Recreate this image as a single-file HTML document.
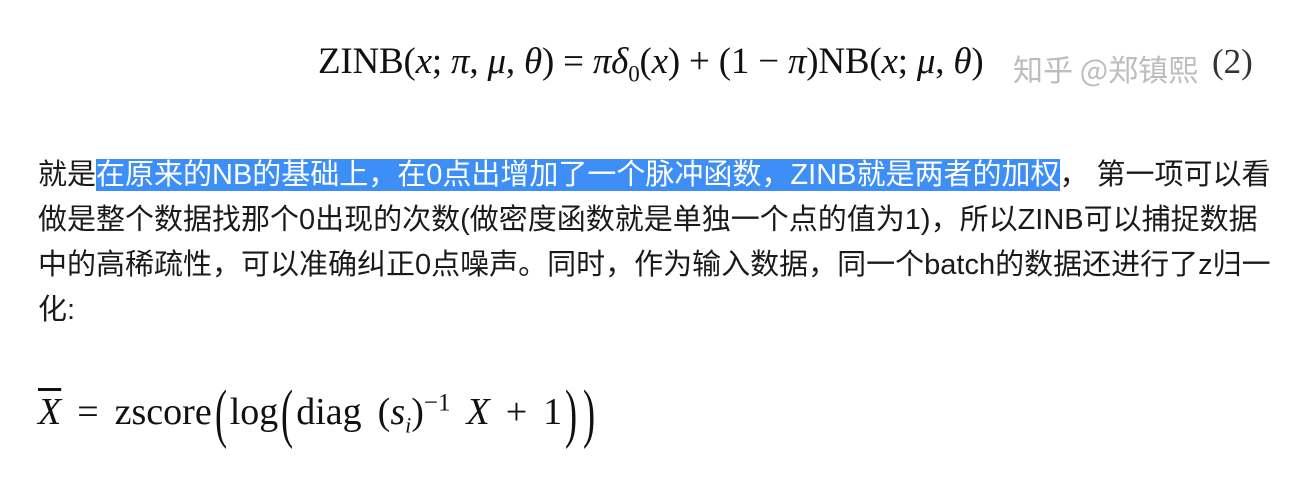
<!DOCTYPE html>
<html><head><meta charset="utf-8"><style>
body{margin:0;width:1289px;height:481px;background:#fff;position:relative;overflow:hidden;font-family:"Liberation Sans","Noto Sans CJK SC",sans-serif;color:#1a1a1a}
.f1{position:absolute;left:318px;top:40px;font-family:"Liberation Serif",serif;font-size:37px;letter-spacing:-0.2px;white-space:nowrap;color:#111}
.f1 i{font-style:italic}
.wm{position:absolute;left:1013px;top:46px;font-size:30px;color:#bdbdbd;font-family:"Noto Sans CJK SC",sans-serif;white-space:nowrap}
.n2{position:absolute;left:1212px;top:42px;font-family:"Liberation Serif",serif;font-size:35px;color:#333}
.p{position:absolute;left:38px;white-space:nowrap;font-size:29px;line-height:45px}
.hl{background:#3e8ef7;color:#fff}
.f2{position:absolute;left:38px;top:376px;font-family:"Liberation Serif",serif;font-size:38px;white-space:nowrap;color:#111}
.big{font-size:66px;display:inline-block;transform:scaleX(0.55);vertical-align:-11px;margin:0 -2px;font-weight:100}
.sp{display:inline-block;width:16px}
</style></head><body>
<div class="f1">ZINB(<i>x</i>; <i>π</i>, <i>μ</i>, <i>θ</i>) = <i>πδ</i><sub style="font-size:23px">0</sub>(<i>x</i>) + (1 − <i>π</i>)NB(<i>x</i>; <i>μ</i>, <i>θ</i>)</div>
<div class="wm">知乎 @郑镇熙</div>
<div class="n2">(2)</div>
<div class="p" style="top:153px">就是<span class="hl">在原来的NB的基础上，在0点出增加了一个脉冲函数，ZINB就是两者的加权</span>， 第一项可以看</div>
<div class="p" style="top:198px">做是整个数据找那个0出现的次数(做密度函数就是单独一个点的值为1)，所以ZINB可以捕捉数据</div>
<div class="p" style="top:243px">中的高稀疏性，可以准确纠正0点噪声。同时，作为输入数据，同一个batch的数据还进行了z归一</div>
<div class="p" style="top:288px">化:</div>
<div class="f2"><i style="text-decoration:overline">X</i><span class="sp"></span>=<span class="sp"></span>zscore<span class="big">(</span>log<span class="big">(</span>diag<span class="sp"></span>(<i>s<sub style="font-size:22px">i</sub></i>)<sup style="font-size:25px">−1</sup><span class="sp"></span><i>X</i><span class="sp"></span>+<span class="sp"></span>1<span class="big">)</span><span class="big">)</span></div>
</body></html>
